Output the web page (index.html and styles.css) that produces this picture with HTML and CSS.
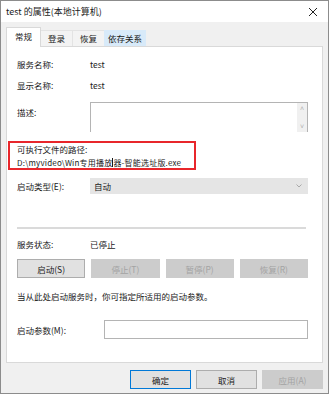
FILE: index.html
```html
<!DOCTYPE html>
<html lang="zh-CN">
<head>
    <meta charset="UTF-8">
    <title>test 的属性(本地计算机)</title>
    <link rel="stylesheet" href="styles.css">
</head>
<body>
<div class="window">
    <header class="titlebar">
        <span class="title">test 的属性(本地计算机)</span>
        <svg class="close" width="10" height="10" viewBox="0 0 10 10">
            <path d="M1 1 L9 9 M9 1 L1 9" stroke="#222" stroke-width="1"/>
        </svg>
    </header>

    <section class="dialog">
        <nav class="tabs">
            <span class="tab active">常规</span>
            <span class="tab">登录</span>
            <span class="tab">恢复</span>
            <span class="tab hover">依存关系</span>
        </nav>

        <div class="panel">
            <div class="row">
                <span class="label">服务名称:</span>
                <span>test</span>
            </div>
            <div class="row">
                <span class="label">显示名称:</span>
                <span>test</span>
            </div>
            <div class="row row-desc">
                <span class="label">描述:</span>
                <div class="textbox">
                    <div class="scroll">
                        <span>&#708;</span>
                        <span>&#709;</span>
                    </div>
                </div>
            </div>

            <!-- 标注框 -->
            <div class="path-mark">
                <div>可执行文件的路径:</div>
                <div class="path">D:\myvideo\Win专用播放<span class="caret"></span>器-智能选址版.exe</div>
            </div>

            <div class="row row-type">
                <span class="label">启动类型(E):</span>
                <div class="select">
                    <span>自动</span>
                    <svg width="6" height="4" viewBox="0 0 6 4">
                        <path d="M0.5 0.5 L3 3 L5.5 0.5" fill="none" stroke="#999" stroke-width="0.8"/>
                    </svg>
                </div>
            </div>

            <hr class="sep">

            <div class="row">
                <span class="label">服务状态:</span>
                <span>已停止</span>
            </div>
            <div class="btn-row">
                <button class="btn">启动(S)</button>
                <button class="btn off">停止(T)</button>
                <button class="btn off">暂停(P)</button>
                <button class="btn off">恢复(R)</button>
            </div>
            <p class="hint">当从此处启动服务时，你可指定所适用的启动参数。</p>

            <div class="row row-param">
                <span class="label wide">启动参数(M):</span>
                <div class="input"></div>
            </div>
        </div>

        <footer class="footer">
            <button class="btn default">确定</button>
            <button class="btn">取消</button>
            <button class="btn off">应用(A)</button>
        </footer>
    </section>
</div>
</body>
</html>
```

FILE: styles.css
```css
body{
    margin: 0;
    font-family: "Noto Sans CJK SC", "Liberation Sans", sans-serif;
    font-size: 8.5px;
    color: #1a1a1a;
}
.window{
    width: 329px;
    height: 394px;
    box-sizing: border-box;
    border: 1px solid #8c8c8c;
    display: flex;
    flex-direction: column;
    background-color: #f0f0f0;
}
.titlebar{
    height: 21px;
    background-color: white;
    display: flex;
    align-items: center;
    justify-content: space-between;
    padding: 0 10px 0 5px;
}
.title{
    font-size: 9px;
}
.dialog{
    flex: 1;
    padding: 5px 5px 0 5px;
    display: flex;
    flex-direction: column;
}
.tabs{
    display: flex;
    align-items: flex-end;
    height: 19px;
}
.tab{
    height: 16px;
    line-height: 15px;
    padding: 0;
    box-sizing: border-box;
    width: 33px;
    text-align: center;
    background-color: #f3f3f3;
    border: 1px solid #e3e3e3;
    border-bottom: none;
    margin-left: -1px;
}
.tab.active{
    width: 35px;
    margin-left: 0;
    background-color: white;
    border-color: #d9d9d9;
    line-height: 17px;
    position: relative;
    z-index: 1;
    margin-bottom: -1px;
    height: 20px;
}
.tab.hover{
    width: 42px;
    background-color: #d8eaf9;
    border-color: #d8eaf9;
}
.panel{
    height: 317px;
    box-sizing: border-box;
    background-color: white;
    border: 1px solid #d9d9d9;
    padding: 6px 14px 0 10px;
}
.row{
    display: flex;
    align-items: center;
    height: 21px;
}
.label{
    width: 73px;
    flex-shrink: 0;
}
.label.wide{
    width: 87px;
}
.row-desc{
    height: auto;
    align-items: flex-start;
    margin-top: 7px;
}
.row-desc .label{
    padding-top: 4px;
}
.textbox{
    flex: 1;
    height: 30px;
    box-sizing: border-box;
    border: 1px solid #b4b4b4;
    border-bottom: none;
    display: flex;
    justify-content: flex-end;
}
.scroll{
    width: 10px;
    background-color: #f0f0f0;
    display: flex;
    flex-direction: column;
    justify-content: space-between;
    align-items: center;
    color: #b0b0b0;
    font-size: 7px;
    line-height: 11px;
}
.path-mark{
    margin: 9px 0 0 -9px;
    width: 188px;
    height: 29px;
    box-sizing: border-box;
    border: 2px solid #e8262b;
    padding: 0 0 0 7px;
    line-height: 13px;
    white-space: nowrap;
}
.path{
    font-size: 8px;
    letter-spacing: 0.2px;
}
.caret{
    display: inline-block;
    width: 1px;
    height: 9px;
    background-color: #1a1a1a;
    vertical-align: -1px;
}
.row-type{
    margin-top: 8px;
    height: 16px;
}
.select{
    flex: 1;
    height: 16px;
    background-color: #e5e5e5;
    display: flex;
    align-items: center;
    justify-content: space-between;
    padding: 0 6px 0 4px;
}
.sep{
    margin: 33px 2px 0 0;
    border: none;
    height: 2px;
    background-color: #dadada;
}
.row + .btn-row{
    margin-top: 5px;
}
.sep + .row{
    margin-top: 4px;
}
.btn-row{
    display: grid;
    grid-template-columns: repeat(4, 1fr);
    gap: 6px;
}
.btn{
    font: inherit;
    height: 19px;
    padding: 0;
    background-color: #e1e1e1;
    border: 1px solid #adadad;
    color: #1a1a1a;
}
.btn.off{
    background-color: #cccccc;
    border-color: #cccccc;
    color: #a3a3a3;
}
.btn.default{
    border-color: #0078d7;
}
.hint{
    margin: 11px 0 0 0;
    line-height: 14px;
}
.row-param{
    margin-top: 17px;
    height: 19px;
}
.input{
    flex: 1;
    height: 19px;
    box-sizing: border-box;
    border: 1px solid #b4b4b4;
}
.footer{
    display: flex;
    justify-content: flex-end;
    gap: 5px;
    margin-top: 7px;
}
.footer .btn{
    width: 61px;
}
```
